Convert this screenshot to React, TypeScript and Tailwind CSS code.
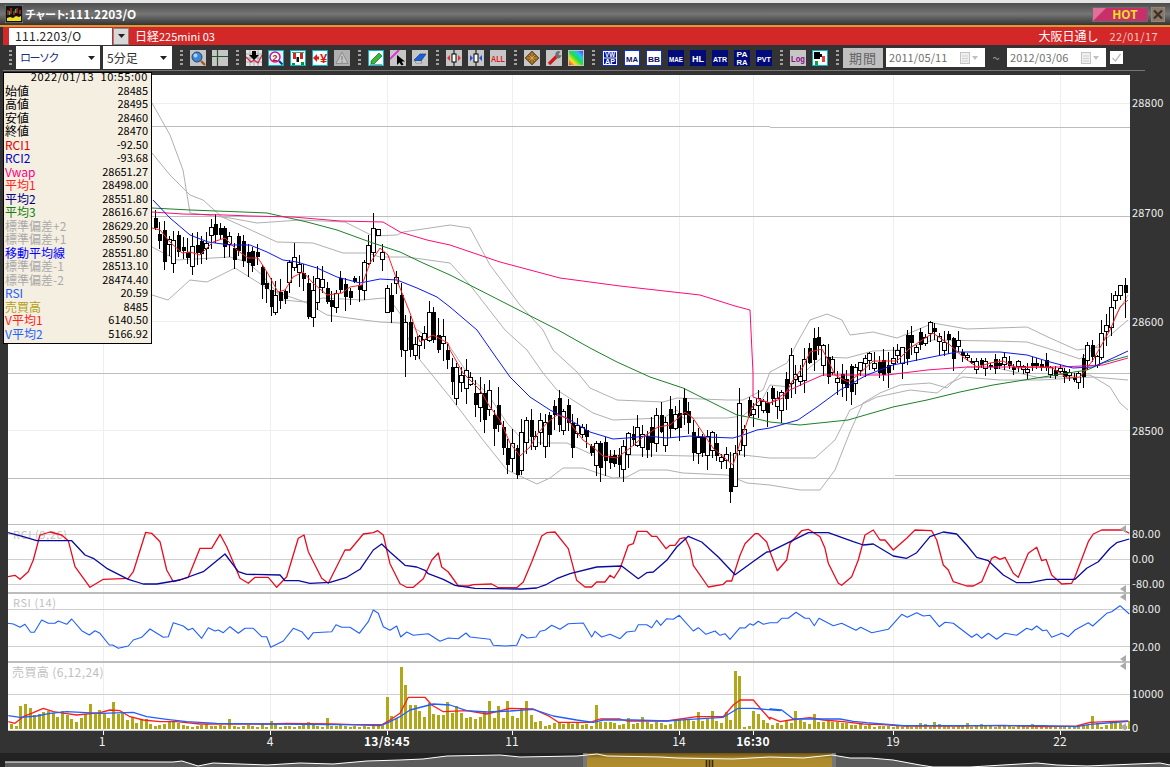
import type { ReactNode } from 'react'

// everything in the chart is written in page coordinates, each pane's viewBox just shifts to it
const zoomed = (ox: number, oy: number, flat: number[]) => {
  const out: string[] = []
  for (let i = 0; i < flat.length; i += 2) out.push(`${(ox + flat[i] / 3).toFixed(1)},${(oy + flat[i + 1] / 3).toFixed(1)}`)
  return out.join(' ')
}

const RED_MA =
  '152,228 160,230 170,242 182,253 190,252 200,255 213,242 225,238 237,250 248,258 258,258 267,272 278,292 285,290 293,277 303,272 313,283 327,295 342,293 350,287 362,285 370,263 380,248 388,255 398,283 410,313 420,342 433,335 448,343 450,350 463,373 480,390 490,407 500,420 510,443 520,456 530,447 538,433 547,423 557,415 567,418 573,427 583,440 593,447 603,456 617,458 630,448 643,437 658,427 670,425 685,412 693,418 703,433 713,448 733,465 740,443 752,407 760,400 770,403 783,398 793,380 803,367 810,352 822,349 828,360 835,375 848,382 858,375 873,361 897,361 910,348 933,333 950,345 963,357 977,367 990,363 1003,361 1017,368 1037,367 1053,368 1067,378 1080,377 1093,360 1110,330 1120,307 1128,300'
const BLUE_MA =
  '153,200 170,218 190,235 208,242 230,245 250,245 267,252 283,260 297,262 317,268 337,277 360,283 380,279 397,280 417,288 437,297 450,307 477,330 493,353 510,377 530,397 550,410 570,420 590,432 613,439 627,438 647,436 667,438 690,436 707,437 733,438 743,435 757,430 770,428 798,420 817,407 840,390 867,375 893,365 927,358 957,352 1000,352 1027,355 1050,362 1073,368 1093,367 1113,358 1128,351'
const GREEN_MA =
  '152,208 190,210 243,212 267,213 307,222 337,230 370,242 400,252 423,263 450,275 558,330 590,348 617,362 650,377 683,388 707,400 737,415 753,418 770,422 800,425 848,420 893,407 927,400 960,392 993,385 1043,377 1087,370 1103,363 1128,356'
const VWAP =
  '152,212 183,214 225,215 250,216 293,217 340,221 383,222 400,232 427,240 450,245 500,262 560,278 620,286 700,295 735,306 750,310 753,373 753,397 770,403 790,390 807,382 823,375 887,375 927,370 967,367 1060,367 1103,365 1128,358'
const BANDS = [
  '152,103 170,135 183,170 190,213 230,218 257,223 300,220 345,222 373,236 397,235 403,232 450,225 470,228 490,265 520,305 543,330 553,350 577,372 590,388 617,400 663,402 677,398 727,400 743,400 763,390 770,372 787,363 797,343 810,320 827,314 842,320 850,335 873,332 897,338 917,330 933,323 967,329 1027,327 1050,338 1077,350 1100,347 1113,320 1128,295',
  '152,153 170,175 190,195 203,200 222,217 240,225 277,242 313,243 343,253 367,253 380,257 407,257 450,263 470,285 505,330 527,350 543,373 557,390 593,413 613,420 663,418 677,410 683,418 727,418 743,416 763,398 770,385 790,387 810,367 823,357 847,358 873,351 900,350 933,340 993,341 1027,342 1053,350 1080,359 1107,338 1128,320',
  '152,247 177,260 230,257 247,262 262,275 283,300 305,302 323,298 363,300 383,298 390,300 407,323 425,335 447,343 450,347 470,377 487,393 507,423 520,437 540,443 567,443 593,455 617,455 650,455 690,456 727,455 743,455 770,458 815,458 835,440 850,410 877,397 910,390 937,393 950,383 963,377 1000,380 1040,380 1093,377 1128,380',
  '152,295 168,300 190,280 207,282 235,268 270,290 305,302 327,315 363,320 380,322 400,323 420,360 450,397 483,440 507,470 537,484 550,478 563,468 583,468 613,478 627,477 640,470 667,470 683,473 727,475 747,483 770,485 800,490 820,490 835,470 850,432 863,403 880,393 900,385 930,383 947,388 967,367 993,367 1040,378 1090,375 1110,387 1120,403 1128,410',
]

const RCI_RED = [
  zoomed(0, 520, [24, 170, 45, 166, 60, 178, 85, 155, 100, 120, 120, 45, 150, 36, 185, 45, 205, 62, 225, 140, 270, 202, 310, 178, 385, 175, 400, 155, 437, 37, 455, 40, 480, 65, 500, 150, 520, 185, 565, 172, 600, 85, 635, 85, 660, 43, 680, 80, 720, 175, 745, 190, 765, 172, 805, 172, 830, 202, 860, 170, 895, 55, 912, 45, 925, 95, 965, 175, 985, 190, 1035, 90, 1050, 90, 1090, 42, 1120, 38, 1133, 32, 1150, 45, 1165, 110]),
  zoomed(390, 522, [0, 125, 30, 185, 50, 196, 70, 196, 100, 170, 125, 115, 145, 93, 155, 135, 175, 150, 205, 192, 235, 192, 250, 188, 305, 186, 325, 197, 380, 197, 400, 180, 425, 120, 455, 42, 470, 32, 495, 30, 535, 80, 560, 175, 585, 195, 605, 195, 620, 180, 645, 180, 660, 160, 672, 168, 690, 140, 715, 70, 730, 65, 742, 28, 770, 28, 785, 43, 800, 43, 828, 80, 840, 70, 855, 70, 870, 50, 885, 47, 900, 80, 910, 130, 955, 195, 1000, 187, 1010, 177, 1025, 177, 1050, 100, 1065, 65, 1095, 35, 1105, 35, 1130, 60]),
  zoomed(770, 520, [0, 95, 22, 152, 50, 120, 60, 70, 95, 32, 115, 28, 150, 50, 165, 85, 175, 130, 205, 190, 215, 196, 245, 170, 265, 120, 285, 45, 310, 30, 330, 60, 345, 60, 370, 90, 410, 55, 435, 30, 485, 32, 500, 60, 520, 135, 535, 150, 550, 185, 590, 198, 610, 198, 635, 185, 665, 115, 675, 110, 690, 118, 705, 112, 730, 160, 745, 172, 775, 100, 800, 82, 815, 122, 828, 118, 845, 165, 875, 192, 905, 190, 915, 170, 955, 65, 970, 42, 995, 30, 1060, 30, 1078, 40]),
].join(' ')
const RCI_BLUE = [
  zoomed(0, 520, [24, 38, 70, 50, 110, 62, 215, 62, 255, 105, 280, 115, 320, 145, 385, 178, 430, 192, 470, 192, 540, 180, 610, 155, 675, 102, 715, 155, 740, 163, 840, 165, 855, 182, 895, 182, 930, 190, 990, 187, 1040, 172, 1080, 148, 1120, 90, 1145, 72]),
  zoomed(390, 522, [0, 90, 45, 130, 80, 135, 105, 145, 115, 155, 160, 172, 195, 190, 255, 199, 395, 201, 440, 198, 470, 187, 500, 170, 540, 155, 620, 135, 695, 132, 745, 170, 770, 152, 790, 150, 830, 115, 860, 75, 895, 43, 935, 60, 985, 105, 1035, 158, 1095, 115, 1130, 90]),
  zoomed(770, 520, [0, 95, 50, 70, 115, 38, 175, 38, 250, 65, 280, 75, 310, 72, 370, 108, 410, 115, 440, 98, 480, 50, 520, 36, 560, 42, 590, 75, 620, 112, 655, 122, 700, 165, 740, 188, 780, 188, 830, 178, 915, 178, 950, 145, 985, 125, 1020, 85, 1040, 68, 1078, 57]),
].join(' ')
const RSI_LINE = [
  zoomed(0, 520, [24, 310, 40, 312, 60, 322, 75, 313, 92, 337, 103, 337, 125, 300, 145, 310, 165, 310, 175, 303, 200, 313, 215, 297, 245, 332, 268, 345, 285, 332, 300, 340, 328, 375, 338, 375, 355, 385, 385, 378, 400, 360, 425, 352, 450, 327, 490, 352, 505, 350, 520, 308, 550, 318, 565, 330, 578, 325, 605, 355, 625, 323, 645, 333, 655, 330, 670, 338, 690, 320, 715, 340, 735, 325, 760, 325, 785, 350, 800, 350, 812, 382, 850, 363, 880, 325, 905, 335, 925, 358, 940, 338, 995, 335, 1008, 314, 1025, 322, 1050, 322, 1078, 340, 1105, 305, 1120, 270, 1135, 280, 1150, 320]),
  zoomed(390, 522, [0, 325, 20, 312, 32, 345, 50, 330, 70, 340, 115, 335, 150, 358, 175, 348, 205, 350, 228, 333, 240, 345, 300, 352, 310, 370, 345, 372, 380, 370, 395, 337, 412, 348, 438, 345, 450, 328, 465, 325, 485, 310, 510, 322, 535, 305, 580, 303, 605, 345, 615, 328, 635, 345, 660, 337, 690, 350, 710, 330, 735, 327, 745, 308, 770, 308, 785, 317, 800, 295, 812, 310, 830, 290, 850, 292, 868, 280, 910, 327, 925, 317, 948, 337, 975, 327, 990, 340, 1005, 335, 1020, 352, 1050, 317, 1065, 318, 1080, 305, 1090, 310, 1105, 298, 1120, 307]),
  zoomed(770, 520, [0, 308, 22, 308, 35, 295, 55, 295, 78, 277, 105, 295, 118, 295, 133, 317, 147, 295, 190, 317, 215, 310, 258, 331, 272, 322, 305, 338, 355, 328, 395, 283, 412, 292, 440, 278, 460, 288, 480, 286, 508, 320, 525, 307, 550, 310, 605, 352, 620, 342, 635, 355, 655, 340, 680, 358, 705, 340, 740, 346, 770, 325, 785, 330, 800, 318, 818, 332, 830, 330, 845, 352, 875, 340, 895, 350, 915, 330, 955, 308, 968, 318, 1010, 280, 1025, 275, 1050, 257, 1078, 282]),
].join(' ')
const VOL_RED = [
  zoomed(0, 520, [25, 605, 45, 610, 70, 590, 100, 578, 130, 565, 160, 575, 195, 580, 230, 585, 300, 578, 330, 570, 360, 572, 390, 590, 430, 600, 480, 605, 530, 605, 600, 612, 700, 612, 800, 612, 860, 610, 1000, 612, 1140, 617, 1170, 600]),
  zoomed(400, 640, [0, 220, 25, 172, 75, 172, 95, 195, 130, 215, 200, 212, 260, 222, 330, 205, 400, 207, 450, 230, 475, 247, 530, 247, 570, 247, 600, 237, 660, 237, 680, 243, 730, 243, 800, 243, 890, 230, 970, 230, 1000, 195, 1020, 180, 1060, 180, 1085, 210, 1110, 238]),
  zoomed(770, 520, [0, 592, 30, 605, 60, 600, 120, 593, 160, 600, 220, 605, 280, 612, 340, 614, 400, 618, 560, 618, 700, 616, 820, 620, 920, 618, 960, 607, 1030, 604, 1075, 603]),
].join(' ')
const VOL_BLUE = [
  zoomed(0, 520, [25, 587, 60, 592, 110, 588, 150, 580, 200, 575, 300, 580, 400, 577, 440, 590, 500, 598, 560, 605, 650, 610, 800, 612, 1000, 614, 1150, 614, 1170, 605]),
  zoomed(400, 640, [0, 230, 30, 210, 100, 192, 150, 195, 200, 212, 260, 216, 330, 213, 400, 208, 460, 228, 530, 240, 580, 247, 610, 240, 700, 240, 800, 243, 870, 238, 970, 232, 1015, 205, 1060, 205, 1140, 212]),
  zoomed(770, 520, [0, 567, 35, 570, 70, 597, 210, 597, 250, 604, 290, 608, 400, 617, 820, 617, 920, 620, 960, 613, 1050, 606, 1075, 604]),
].join(' ')

const VOLUMES = [
  5, 3, 23, 25, 21, 14, 15, 17, 18, 16, 12, 18, 14, 10, 7, 11, 15, 25, 15, 19, 16, 11, 27, 15, 16, 9, 12, 6, 9, 10, 5, 3, 4, 5, 8, 8, 6, 4, 3, 2,
  3, 4, 5, 3, 3, 4, 3, 10, 3, 2, 3, 4, 3, 2, 6, 2, 8, 6, 2, 3, 3, 2, 3, 4, 7, 4, 3, 2, 11, 3, 3, 4, 3, 2, 3, 2, 3, 2, 3, 3,
  5, 32, 13, 11, 62, 44, 24, 24, 18, 12, 26, 15, 14, 14, 27, 16, 23, 16, 11, 12, 10, 12, 18, 28, 11, 23, 11, 28, 13, 11, 21, 28, 14, 7, 8, 3, 4, 6, 6,
  5, 6, 5, 7, 4, 5, 3, 24, 7, 7, 7, 6, 4, 5, 11, 5, 6, 12, 7, 5, 7, 6, 4, 5, 10, 10, 9, 10, 8, 17, 8, 10, 18, 8, 6, 17, 9, 58, 53, 2, 3, 18, 15, 9, 6, 4,
  6, 4, 9, 6, 18, 9, 7, 5, 15, 7, 7, 8, 7, 7, 6, 6, 4, 4, 5, 3, 4, 2, 3, 3, 3, 2, 3, 2, 3, 2, 3, 6, 5, 2, 7, 5, 4, 3, 2, 3, 3, 6, 2, 3, 5, 4, 3, 2, 3, 4,
  3, 2, 3, 3, 2, 5, 3, 2, 3, 2, 3, 2, 3, 2, 3, 4, 3, 4, 13, 6, 2, 4, 8, 8, 6, 3, 8,
]

const barX = (i: number) => 11 + 4.64 * i

const redPts = RED_MA.split(' ').map((p) => p.split(',').map(Number))
const redAt = (x: number) => {
  for (let i = 1; i < redPts.length; i++) {
    if (x <= redPts[i][0]) {
      const [x0, y0] = redPts[i - 1]
      const [x1, y1] = redPts[i]
      return y0 + ((y1 - y0) * (x - x0)) / (x1 - x0 || 1)
    }
  }
  return redPts[redPts.length - 1][1]
}

type Candle = { hi: number; top: number; bot: number; lo: number; filled: boolean }

// hand read from the reference: bar index, body top, body bottom, filled
const BODIES: [number, number, number, number][] = [
  [31, 218, 228, 1], [33, 230, 262, 1], [35, 240, 263, 0], [36, 235, 252, 1], [40, 245, 253, 1], [43, 227, 235, 0], [44, 224, 235, 1], [45, 228, 235, 1], [46, 228, 247, 1],
  [51, 252, 263, 1], [54, 267, 285, 1], [55, 283, 289, 1], [56, 290, 307, 1], [57, 295, 312, 0], [60, 262, 282, 0], [61, 257, 267, 0], [63, 273, 279, 1], [64, 283, 317, 1], [65, 290, 317, 0],
  [68, 288, 302, 1], [69, 300, 307, 1], [70, 293, 307, 0], [71, 278, 290, 1], [76, 262, 290, 0], [77, 245, 263, 0], [81, 288, 312, 0], [82, 295, 312, 1], [84, 295, 350, 1], [86, 322, 350, 1], [87, 344, 355, 0],
  [90, 312, 340, 0], [91, 312, 340, 1], [92, 335, 350, 1], [94, 350, 360, 1], [95, 367, 382, 1], [96, 367, 398, 0], [100, 393, 405, 1], [102, 393, 420, 1], [106, 427, 448, 1], [107, 448, 465, 1],
  [110, 432, 470, 0], [111, 420, 442, 0], [112, 420, 437, 1], [114, 420, 432, 0], [118, 398, 425, 1], [121, 423, 448, 1], [126, 443, 465, 0], [127, 443, 468, 1], [135, 427, 445, 0], [138, 427, 443, 1], [139, 415, 443, 0], [140, 415, 432, 1],
  [145, 398, 415, 1], [147, 432, 453, 1], [148, 437, 453, 0], [149, 437, 453, 1], [168, 355, 383, 0], [173, 338, 360, 1], [176, 357, 377, 1], [182, 367, 383, 0], [187, 362, 373, 1],
  [232, 345, 360, 0], [233, 345, 357, 1], [235, 333, 357, 0], [237, 307, 327, 0], [238, 295, 300, 0],
]

// these keep their wicks as read too
const KEY_CANDLES: Record<number, Candle> = {
  78: { hi: 213, top: 228, bot: 252, lo: 262, filled: false },
  79: { hi: 229, top: 229, bot: 235, lo: 235, filled: false },
  85: { hi: 315, top: 322, bot: 350, lo: 377, filled: false },
  155: { hi: 452, top: 468, bot: 492, lo: 503, filled: true },
  156: { hi: 445, top: 453, bot: 486, lo: 486, filled: false },
  157: { hi: 388, top: 403, bot: 450, lo: 455, filled: false },
  239: { hi: 287, top: 285, bot: 295, lo: 300, filled: false },
  240: { hi: 278, top: 285, bot: 293, lo: 318, filled: true },
}

let seed = 17
const rnd = () => {
  seed = (seed * 1103515 + 12345) % 2147483
  return seed / 2147483
}

const bodyMap = new Map(BODIES.map((b) => [b[0], b]))

const CANDLES: (Candle & { x: number })[] = []
for (let i = 31; i <= 240; i++) {
  const x = barX(i)
  const scale = x > 960 && x < 1075 ? 0.45 : x > 395 && x < 520 ? 1.3 : 1
  const body = bodyMap.get(i)
  const c = redAt(x) + (rnd() - 0.5) * 18 * scale
  const half = (2 + rnd() * rnd() * 12) * scale
  const up = 1 + rnd() * 13 * scale
  const down = 1 + rnd() * 14 * scale
  const gen: Candle = body
    ? { hi: body[1] - up, top: body[1], bot: body[2], lo: body[2] + down, filled: body[3] === 1 }
    : { hi: c - half - up, top: c - half, bot: c + half, lo: c + half + down, filled: rnd() < 0.5 }
  CANDLES.push({ ...(KEY_CANDLES[i] ?? gen), x })
}

const V_GRID = [103, 270, 387, 512, 679, 753, 893, 1060]

const Line = ({ points, color, width = 1 }: { points: string; color: string; width?: number }) => (
  <polyline points={points} fill="none" stroke={color} strokeWidth={width} strokeLinejoin="round" />
)

const Grid = ({ y, dy, h }: { y: number[]; dy: number; h: number }) => (
  <g shapeRendering="crispEdges">
    {V_GRID.map((x) => (
      <line key={x} x1={x} x2={x} y1={dy} y2={dy + h} stroke="#eeeeee" />
    ))}
    {y.map((v) => (
      <line key={v} x1={8} x2={1130} y1={v + 0.5} y2={v + 0.5} stroke="#cfcfcf" />
    ))}
  </g>
)

const Mark = ({ y }: { y: number }) => <polygon points={`1126,${y - 4} 1126,${y + 4} 1120,${y}`} fill="#aaaaaa" />

const Pane = ({ top, height, labels, children }: { top: number; height: number; labels: [string, number][]; children: ReactNode }) => (
  <div className="flex" style={{ height }}>
    <svg width={1122} height={height} viewBox={`8 ${top} 1122 ${height}`} className="block bg-white shrink-0">
      {children}
    </svg>
    <div className="relative w-[40px]">
      {labels.map(([t, y]) => (
        <span key={t + y} className="absolute left-[2px] text-[11px] leading-[14px] text-[#f0f0f0] tracking-[0.2px]" style={{ top: y - top - 7 }}>
          {t}
        </span>
      ))}
    </div>
  </div>
)

const Divider = ({ thick }: { thick?: boolean }) => (
  <div className={thick ? 'h-[2px] w-[1122px] bg-[#bdbdbd]' : 'h-px w-[1122px] bg-[#bdbdbd]'} />
)

const Grip = () => (
  <div className="flex h-[15px] w-[3px] flex-col justify-between">
    <i className="h-[2px] bg-[#a0a0a0]" />
    <i className="h-[2px] bg-[#a0a0a0]" />
    <i className="h-[2px] bg-[#a0a0a0]" />
    <i className="h-[2px] bg-[#a0a0a0]" />
  </div>
)

const Ico = ({ bg = '#c6c6c6', teal, blue, children }: { bg?: string; teal?: boolean; blue?: boolean; children: ReactNode }) => (
  <svg width={16} height={16} viewBox="0 0 16 16" className="block shrink-0">
    <rect x={0} y={0} width={16} height={16} fill={bg} />
    {children}
    {teal && <rect x={0.5} y={0.5} width={15} height={15} fill="none" stroke="#00b9c6" />}
    {blue && <rect x={0.5} y={0.5} width={15} height={15} fill="none" stroke="#1030e0" />}
  </svg>
)

const Label = ({ t, y = 11.5, color, w = 14, size = 8 }: { t: string; y?: number; color: string; w?: number; size?: number }) => (
  <text x={8} y={y} textAnchor="middle" fontSize={size} fontWeight={700} fontFamily="Liberation Sans, sans-serif" fill={color} textLength={w} lengthAdjust="spacingAndGlyphs">
    {t}
  </text>
)

const Group = ({ children }: { children: ReactNode }) => <div className="ml-[7px] mr-[8px] flex gap-[6px]">{children}</div>

const Tools1 = () => (
  <Group>
    <Ico>
      <circle cx={7} cy={7} r={5} fill="#3c86d8" stroke="#28466c" />
      <circle cx={5.5} cy={5.5} r={2} fill="#a8d4f8" />
      <path d="M11 11l4 4" stroke="#a05a20" strokeWidth={2.4} />
    </Ico>
    <Ico>
      <path d="M0 6.5h16M5.5 0v16" stroke="#1f5a28" strokeWidth={1.2} />
    </Ico>
  </Group>
)

const Tools2 = () => (
  <Group>
    <Ico bg="#e4e4e4">
      <path d="M0 4h16M0 8h16M0 12h16M4 0v16M8 0v16M12 0v16" stroke="#9a9a9a" strokeWidth={0.7} />
      <path d="M0 7l5 5 3-2 4 3 4-8" fill="none" stroke="#d02048" strokeWidth={1.1} />
      <path d="M6 1h4v4h3l-5 5-5-5h3z" fill="#000" />
    </Ico>
    <Ico teal bg="#f0e8f4">
      <circle cx={7} cy={7} r={5} fill="#fff" stroke="#c01890" strokeWidth={1.5} />
      <text x={7} y={10.5} textAnchor="middle" fontSize={9} fontWeight={700} fontFamily="Liberation Sans, sans-serif" fill="#c01020">
        2
      </text>
      <path d="M11 11l3.5 3.5" stroke="#1030a0" strokeWidth={2} />
    </Ico>
    <Ico teal bg="#ffffff">
      <path d="M3 3h3v6H3zM10 3h3v6h-3z" fill="#e02020" />
      <path d="M6.5 7h2.5v5H6.500z" fill="#101010" />
      <path d="M2 13h3v2H2zM11 12h3v3h-3z" fill="#109030" />
      <path d="M2 2.500h12" stroke="#208040" strokeWidth={0.8} />
    </Ico>
    <Ico teal bg="#ffffff">
      <path d="M1 8l4-4v2.500h2v3H5V12z" fill="#e01818" />
      <text x={11.500} y={13} textAnchor="middle" fontSize={13} fontWeight={700} fontFamily="Liberation Sans, sans-serif" fill="#d81818">
        ¥
      </text>
    </Ico>
    <Ico bg="#b0b0b0">
      <path d="M8 2l6 11.500H2z" fill="#c4c4c4" stroke="#8e8e8e" />
      <path d="M8 6v4M8 11v1.500" stroke="#808080" strokeWidth={1.2} />
    </Ico>
  </Group>
)

const Tools3 = () => (
  <Group>
    <Ico teal bg="#ffffff">
      <path d="M3 11L11 3l3 3-8 8H3z" fill="#38b838" stroke="#106820" strokeWidth={0.7} />
      <path d="M2 14.500h12" stroke="#a0a0a0" />
    </Ico>
    <Ico bg="#c6c6c6">
      <path d="M0 9L9 0" stroke="#e038d8" strokeWidth={2} />
      <path d="M7 5v10l2.500-2.500 2 3 2-1-2-3H15z" fill="#000" />
    </Ico>
    <Ico bg="#c6c6c6">
      <path d="M2 10l6-6h6l-5 7H3z" fill="#1860d8" stroke="#0c2c70" strokeWidth={0.6} />
      <path d="M2 10l2 3h6l-1-2H3z" fill="#f4f4f4" stroke="#606060" strokeWidth={0.6} />
    </Ico>
  </Group>
)

const Tools4 = () => (
  <Group>
    <Ico>
      <path d="M8 0v16" stroke="#000" />
      <rect x={6} y={4} width={4} height={8} fill="#fff" stroke="#000" />
      <path d="M1 8l3-3v6zM15 8l-3-3v6z" fill="#e83030" />
    </Ico>
    <Ico>
      <path d="M8 0v16" stroke="#000" />
      <rect x={6} y={4} width={4} height={8} fill="#fff" stroke="#000" />
      <path d="M5 8L2 5v6zM11 8l3-3v6z" fill="#2050e0" />
    </Ico>
    <Ico>
      <Label t="ALL" color="#e01818" y={11.500} size={8.500} />
    </Ico>
  </Group>
)

const Tools5 = () => (
  <Group>
    <Ico>
      <path d="M8 1l7 7-7 7-7-7z" fill="#8c5a1c" stroke="#4a3010" strokeWidth={0.6} />
      <path d="M5 5l6 6M11 5l-6 6M8 3v10M3 8h10" stroke="#d8b050" strokeWidth={0.8} />
    </Ico>
    <Ico>
      <path d="M3 14l8-8" stroke="#d01818" strokeWidth={3.2} />
      <path d="M9.500 5a3 3 0 0 1 5-3l-2 2 1.500 1.500 1.500-1a3.500 3.500 0 0 1-5 3.500z" fill="#707070" />
    </Ico>
    <svg width={16} height={16} viewBox="0 0 16 16" className="block shrink-0">
      <defs>
        <linearGradient id="rainbow" x1="0" y1="1" x2="1" y2="0">
          <stop offset="0" stopColor="#ff2020" />
          <stop offset="0.25" stopColor="#ffe020" />
          <stop offset="0.5" stopColor="#20e040" />
          <stop offset="0.75" stopColor="#20c0ff" />
          <stop offset="1" stopColor="#8020ff" />
        </linearGradient>
      </defs>
      <rect x={0} y={0} width={16} height={16} fill="#c6c6c6" />
      <rect x={1} y={1} width={14} height={14} fill="url(#rainbow)" />
    </svg>
  </Group>
)

const Tools6 = () => (
  <Group>
    <Ico blue bg="#ffffff">
      <rect x={2} y={2} width={12} height={5.500} fill="#001088" />
      <rect x={2} y={8.500} width={12} height={5.500} fill="#001088" />
      <Label t="VW" color="#fff" y={7} w={10} size={6.500} />
      <Label t="AP" color="#fff" y={13.500} w={10} size={6.500} />
    </Ico>
    <Ico blue bg="#ffffff">
      <rect x={2} y={2} width={12} height={12} fill="#ffffff" />
      <Label t="MA" color="#101060" w={12} size={8} />
    </Ico>
    <Ico blue bg="#ffffff">
      <Label t="BB" color="#101060" w={12} size={8} />
    </Ico>
    <Ico bg="#000a78">
      <Label t="MAE" color="#fff" w={14} size={7} />
    </Ico>
    <Ico bg="#000a78">
      <Label t="HL" color="#fff" w={12} size={9} />
    </Ico>
    <Ico bg="#000a78">
      <Label t="ATR" color="#fff" w={14} size={7.500} />
    </Ico>
    <Ico bg="#000a78">
      <Label t="PA" color="#fff" y={7} w={11} size={7} />
      <Label t="RA" color="#fff" y={14.500} w={11} size={7} />
    </Ico>
    <Ico bg="#000a78">
      <Label t="PVT" color="#fff" w={14} size={7.500} />
    </Ico>
  </Group>
)

const Tools7 = () => (
  <Group>
    <Ico>
      <Label t="Log" color="#8a108a" y={11.500} w={14} size={8.500} />
    </Ico>
    <Ico teal bg="#ffffff">
      <path d="M2 2h6v2h2v3H8v2H2z" fill="#000" />
      <path d="M10 6h3v6h-3z" fill="#e84040" />
      <path d="M3 11h3v4H3z" fill="#10a040" />
    </Ico>
  </Group>
)

const DateBox = ({ value }: { value: string }) => (
  <div className="flex h-[19px] w-[99px] items-center bg-white pl-[3px] text-[11px] tracking-[0.1px] text-[#707070]">
    <span className="w-[70px]">{value}</span>
    <svg width={20} height={14} viewBox="0 0 20 14" className="block">
      <rect x={1.500} y={1.500} width={9} height={11} fill="#f0f0f0" stroke="#c4c4c4" />
      <path d="M3 5h6M3 7.500h6M3 10h6" stroke="#d0d0d0" />
      <path d="M13 5h6l-3 4z" fill="#c0c0c0" />
    </svg>
  </div>
)

const ComboArrow = () => (
  <svg width={7} height={4} viewBox="0 0 7 4" className="block shrink-0">
    <path d="M0 0h7L3.500 4z" fill="#202020" />
  </svg>
)

const POPUP_ROWS: [string, string, string][] = [
  ['始値', '28485', 'text-black'],
  ['高値', '28495', 'text-black'],
  ['安値', '28460', 'text-black'],
  ['終値', '28470', 'text-black'],
  ['RCI1', '-92.50', 'text-[#e00000]'],
  ['RCI2', '-93.68', 'text-[#0000c0]'],
  ['Vwap', '28651.27', 'text-[#ff0080]'],
  ['平均1', '28498.00', 'text-[#ff2020]'],
  ['平均2', '28551.80', 'text-[#000080]'],
  ['平均3', '28616.67', 'text-[#108010]'],
  ['標準偏差+2', '28629.20', 'text-[#aaaaaa]'],
  ['標準偏差+1', '28590.50', 'text-[#aaaaaa]'],
  ['移動平均線', '28551.80', 'text-[#0000ff]'],
  ['標準偏差-1', '28513.10', 'text-[#aaaaaa]'],
  ['標準偏差-2', '28474.40', 'text-[#aaaaaa]'],
  ['RSI', '20.59', 'text-[#2060ff]'],
  ['売買高', '8485', 'text-[#b0a010]'],
  ['V平均1', '6140.50', 'text-[#ff2020]'],
  ['V平均2', '5166.92', 'text-[#2060ff]'],
]

const Popup = () => (
  <div className="absolute left-[3px] top-[72px] h-[272px] w-[149px] border border-black bg-[#f5efe2] pl-[1px] pr-[3px]">
    <div className="-mt-[3px] whitespace-pre text-right text-[11px] leading-[13.5px] tracking-[0.6px] text-black">2022/01/13  10:55:00</div>
    {POPUP_ROWS.map(([name, value, color]) => (
      <div key={name} className="flex h-[13.5px] items-center justify-between leading-[13.5px]">
        <span className={`text-[12px] ${color}`}>{name}</span>
        <span className="text-[11px] text-black">{value}</span>
      </div>
    ))}
  </div>
)

const TIME_LABELS: [string, number, boolean][] = [
  ['1', 102, false],
  ['4', 270, false],
  ['13/8:45', 387, true],
  ['11', 512, false],
  ['14', 679, false],
  ['16:30', 753, true],
  ['19', 893, false],
  ['22', 1060, false],
]

const SCROLL_LINE =
  '5,762 173,762 182,761 198,766 213,763 267,765 300,763 333,764 367,761 400,760 423,759 447,756 500,755 520,757 577,756 597,754 607,756 660,757 677,758 733,759 770,757 803,758 832,755 850,758 870,758 893,760 920,765 933,767 970,767 1003,765 1037,763 1057,765 1087,766 1160,763 1170,765'

const Scroller = () => (
  <svg width={1170} height={14} viewBox="0 753 1170 14" className="block">
    <defs>
      <linearGradient id="gold" x1="0" y1="0" x2="0" y2="1">
        <stop offset="0" stopColor="#6e5212" />
        <stop offset="0.4" stopColor="#ab8a2c" />
        <stop offset="1" stopColor="#b08e30" />
      </linearGradient>
    </defs>
    <rect x={0} y={753} width={1170} height={14} fill="#222222" />
    <polygon points={`${SCROLL_LINE} 1170,767 5,767`} fill="#5c5c5c" />
    <rect x={587} y={753} width={245} height={14} fill="url(#gold)" />
    <rect x={583} y={753} width={4} height={14} fill="#777777" />
    <rect x={832} y={753} width={4} height={14} fill="#777777" />
    <path d="M706.500 760v7M709.500 760v7M712.500 760v7" stroke="#3a2a08" strokeWidth={1.6} />
    <polyline points={SCROLL_LINE} fill="none" stroke="#ffffff" strokeWidth={1} />
  </svg>
)

export default function App() {
  return (
    <div className="relative flex h-[767px] w-[1170px] flex-col overflow-hidden bg-[#333333] font-['Noto_Sans_CJK_JP',sans-serif]">
      <div className="h-[3px] bg-[#e4e4e4]" />

      <div className="flex h-[22px] items-center bg-gradient-to-b from-[#4c4c4c] via-[#767676] to-[#353535] pl-[5px] pr-[5px]">
        <svg width={18} height={18} viewBox="0 0 18 18" className="block shrink-0">
          <rect x={0} y={0} width={18} height={18} fill="#111111" stroke="#b0b0b0" />
          <path d="M3 5v5M6 3v6M9 6v4M12 3v5M15 5v4" stroke="#e03030" strokeWidth={1.2} />
          <path d="M4.500 6v4M10.500 4v4" stroke="#20c040" strokeWidth={1.2} />
          <path d="M2 16V13l3-1 3 1 3-2 3 1 2-1v5z" fill="#f0e020" />
        </svg>
        <span className="ml-[2px] text-[11px] font-bold leading-none text-white">
          <span className="tracking-[-1px]">チャート: </span>
          <span className="text-[12px]">111.2203/O</span>
        </span>
        <div className="ml-auto flex items-center gap-[3px]">
          <div className="relative flex h-[15px] w-[56px] items-center justify-center border border-[#6a6a6a] bg-[#c9306a] pl-[10px]">
            <span className="text-[12px] font-bold leading-none text-[#e8e020]">HOT</span>
            <svg width={14} height={13} viewBox="0 0 14 13" className="absolute left-0 top-0 block">
              <path d="M0 13L13 0H0z" fill="#e07098" />
            </svg>
          </div>
          <svg width={14} height={15} viewBox="0 0 14 15" className="block">
            <rect x={0} y={0} width={14} height={15} fill="#8a7868" stroke="#a09488" />
            <path d="M3 3.500l8 8M11 3.500l-8 8" stroke="#3a3028" strokeWidth={2.2} />
          </svg>
        </div>
      </div>
      <div className="h-[2px] bg-[#d99c34]" />

      <div className="ml-[3px] flex h-[18px] items-center bg-[#d42828] pl-[6px]">
        <div className="flex h-[17px] w-[103px] items-center bg-white pl-[6px] text-[12px] leading-none tracking-[0.3px] text-[#222222]">111.2203/O</div>
        <div className="ml-px flex h-[17px] w-[16px] items-center justify-center border border-[#888888] bg-[#d8d8d8]">
          <ComboArrow />
        </div>
        <span className="ml-[6px] text-[11px] leading-none text-white">
          <span className="text-[12px]">日経</span>225mini 03
        </span>
        <span className="ml-auto text-[12px] leading-none text-white">大阪日通し</span>
        <span className="ml-[11px] mr-[12px] text-[11px] leading-none tracking-[0.4px] text-[#f0c8c0]">22/01/17</span>
      </div>

      <div className="flex h-[25px] items-center pl-[9px]">
        <Grip />
        <div className="ml-[4px] mr-[8px] flex gap-[3px]">
          <div className="flex h-[23px] w-[84px] items-center justify-between bg-white pl-[4px] pr-[5px] text-[11px] tracking-[-1.5px] text-[#1c2c80]">
            ローソク
            <ComboArrow />
          </div>
          <div className="flex h-[23px] w-[69px] items-center justify-between bg-white pl-[4px] pr-[5px] text-[12px] text-[#303030]">
            5分足
            <ComboArrow />
          </div>
        </div>
        <Grip />
        <Tools1 />
        <Grip />
        <Tools2 />
        <Grip />
        <Tools3 />
        <Grip />
        <Tools4 />
        <Grip />
        <Tools5 />
        <Grip />
        <Tools6 />
        <Grip />
        <Tools7 />
        <Grip />
        <div className="ml-[4px] flex items-center">
          <div className="flex h-[20px] w-[40px] items-center justify-center bg-[#c0c0c0] text-[13px] tracking-[1px] text-[#666666]">期間</div>
          <div className="ml-[3px]">
            <DateBox value="2011/05/11" />
          </div>
          <span className="mx-[6px] w-[10px] text-center text-[13px] leading-none text-[#999999]">~</span>
          <DateBox value="2012/03/06" />
          <div className="ml-[4px] flex h-[13px] w-[13px] items-center justify-center bg-white">
            <svg width={11} height={11} viewBox="0 0 11 11" className="block">
              <path d="M1.500 6l3 3 5-7" fill="none" stroke="#bcbcbc" strokeWidth={1.3} />
            </svg>
          </div>
        </div>
      </div>
      <div className="ml-[3px] h-px w-[1142px] bg-[#777777]" />
      <div className="h-[4px]" />

      <div className="flex">
        <div className="w-[8px]" />
        <div className="flex flex-col">
          <Pane top={75} height={449} labels={[['28800', 102], ['28700', 212], ['28600', 321], ['28500', 430]]}>
            <g shapeRendering="crispEdges">
              {V_GRID.map((x) => (
                <line key={x} x1={x} x2={x} y1={75} y2={524} stroke="#efefef" />
              ))}
              {[103, 321, 430].map((v) => (
                <line key={v} x1={8} x2={1130} y1={v + 0.5} y2={v + 0.5} stroke="#eeeeee" />
              ))}
              <path d="M152 126.500H770M770 127.500H1130M8 216.500H1130M8 373.500H1130M8 478.500H1130M895 475.500H1130" stroke="#bdbdbd" fill="none" />
            </g>
            {BANDS.map((b) => (
              <Line key={b} points={b} color="#b0b0b0" />
            ))}
            <g shapeRendering="crispEdges">
              {CANDLES.map((c) => (
                <g key={c.x}>
                  <line x1={Math.round(c.x) + 0.5} x2={Math.round(c.x) + 0.5} y1={c.hi} y2={c.lo} stroke="#000" />
                  <rect x={Math.round(c.x) - 1.5} y={c.top} width={4} height={c.bot - c.top} fill={c.filled ? '#000' : '#fff'} stroke="#000" strokeWidth={c.filled ? 0 : 1} />
                </g>
              ))}
            </g>
            <Line points={GREEN_MA} color="#1c8028" />
            <Line points={VWAP} color="#ff0a78" />
            <Line points={BLUE_MA} color="#0c18f0" />
            <Line points={RED_MA} color="#ff2020" />
          </Pane>
          <Divider />
          <Pane top={525} height={67} labels={[['80.00', 533], ['0.00', 558], ['-80.00', 583]]}>
            <Grid y={[534, 559, 584]} dy={525} h={67} />
            <text x={13} y={539} fontSize={11} fill="#c0c0c0" letterSpacing={0.6}>
              RCI (9,26)
            </text>
            <Line points={RCI_RED} color="#e80c20" width={1.3} />
            <Line points={RCI_BLUE} color="#0a0aa0" width={1.3} />
            <Mark y={529} />
            <Mark y={589} />
          </Pane>
          <Divider thick />
          <Pane top={594} height={67} labels={[['80.00', 608], ['20.00', 646]]}>
            <Grid y={[609, 646]} dy={594} h={67} />
            <text x={13} y={607} fontSize={11} fill="#c0c0c0" letterSpacing={0.6}>
              RSI (14)
            </text>
            <Line points={RSI_LINE} color="#2060ff" width={1.1} />
            <Mark y={597} />
            <Mark y={659} />
          </Pane>
          <Divider thick />
          <Pane top={663} height={67} labels={[['10000', 693], ['0', 727]]}>
            <Grid y={[694]} dy={663} h={67} />
            <text x={12} y={677} fontSize={12} fill="#c0c0c0" letterSpacing={0.4}>
              売買高 (6,12,24)
            </text>
            <g shapeRendering="crispEdges">
              {VOLUMES.map((v, i) => (
                <rect key={i} x={Math.round(barX(i)) - 1} y={729 - v} width={3} height={v} fill="#b0a818" />
              ))}
            </g>
            <Line points={VOL_RED} color="#ff1c1c" width={1.3} />
            <Line points={VOL_BLUE} color="#2060ff" width={1.3} />
            <Mark y={666} />
            <Mark y={727} />
          </Pane>
          <div className="h-px w-[1122px] bg-[#c8c8c8]" />
        </div>
      </div>

      <div className="relative h-[22px] shrink-0">
        {V_GRID.map((x) => (
          <i key={x} className="absolute top-0 h-[4px] w-px bg-white" style={{ left: x }} />
        ))}
        {TIME_LABELS.map(([t, x, bold]) => (
          <span
            key={t}
            className={bold ? 'absolute top-px -translate-x-1/2 text-[12px] font-bold tracking-[0.3px] text-white' : 'absolute top-px -translate-x-1/2 text-[12px] text-[#f0f0f0]'}
            style={{ left: x }}
          >
            {t}
          </span>
        ))}
      </div>
      <Scroller />

      <Popup />
    </div>
  )
}
